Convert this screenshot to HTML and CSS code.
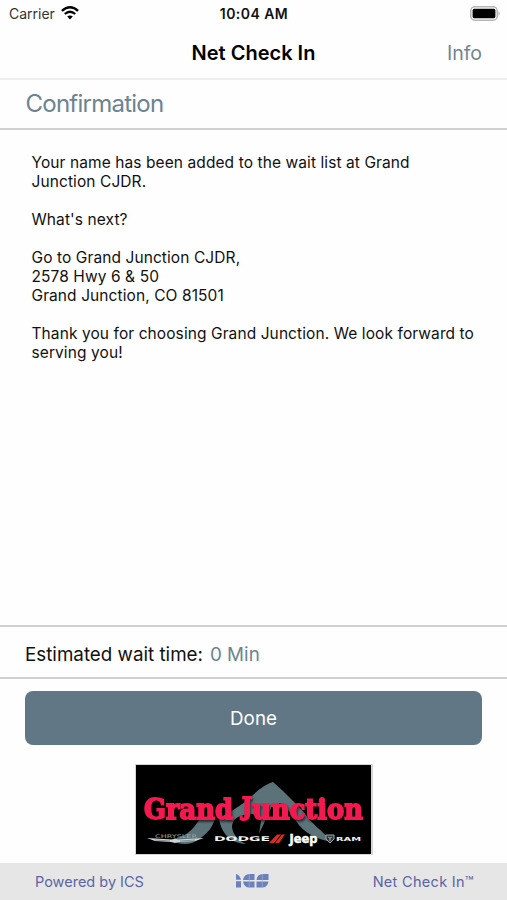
FILE: index.html
```html
<!DOCTYPE html>
<html lang="en">
<head>
<meta charset="utf-8">
<title>Net Check In</title>
<link rel="stylesheet" href="styles.css">
</head>
<body>
<div class="screen">
  <div class="status">
    <div class="carrier"><span class="carrier-name">Carrier</span>
      <svg class="wifi" width="18" height="14" viewBox="0 0 18 14" fill="none" stroke="#000" stroke-width="2.3"><path d="M.9 4.8Q9-2.4 17.1 4.8"/><path d="M3.8 8Q9 3.4 14.2 8"/><path d="M9 13.4 6.2 10.6Q9 8.3 11.8 10.6Z" fill="#000" stroke="none"/></svg>
    </div>
    <span class="time">10:04 AM</span>
    <svg class="battery" width="31" height="15" viewBox="0 0 31 15"><rect x=".8" y=".8" width="26.4" height="13.4" rx="4" fill="#fff" stroke="#b5b5b5" stroke-width="1.5"/><rect x="2.6" y="2.7" width="22.8" height="9.6" rx="1.8"/><path d="M28.5 5Q31 7.5 28.5 10Z" fill="#b0b0b0"/></svg>
  </div>
  <header class="nav"><span></span><h1 class="title">Net Check In</h1><a class="info">Info</a></header>
  <h2 class="heading">Confirmation</h2>
  <main class="message">
    <p>Your name has been added to the wait list at Grand<br>Junction CJDR.</p>
    <p>What's next?</p>
    <p>Go to Grand Junction CJDR,<br>2578 Hwy 6 &amp; 50<br>Grand Junction, CO 81501</p>
    <p>Thank you for choosing Grand Junction. We look forward to<br>serving you!</p>
  </main>
  <div class="wait"><span class="wait-label">Estimated wait time:</span><span class="wait-value">0 Min</span></div>
  <div class="actions"><button class="done">Done</button></div>
  <div class="brand">
    <svg width="238" height="91" viewBox="0 0 238 91">
      <rect width="238" height="91" fill="#d5d5d5"/><rect x="1" y="1" width="235" height="89" fill="#000"/>
      <path fill="#5a7278" d="M84 54Q98 47 114 35Q127 21 138 18L148 27L168 47C176 60 187 66 197 78C181 75 169 69 161 57L148 39L138 40L130 57L124 70L126 57L118 50C104 50 97 55 97 63C98 71 103 76 111 80C95 79 86 69 84 54Z"/>
      <path fill="#5a7278" d="M65 54H80C78 65 68 74 57 79Q46 82 35 76C50 73 59 66 65 54Z"/>
      <text class="dealer" x="9" y="55" textLength="219" lengthAdjust="spacingAndGlyphs">Grand <tspan class="initial" dy="-4.5">J</tspan><tspan dy="4.5">unction</tspan></text>
      <text class="make muted" x="20" y="73.500" font-size="5" textLength="42" lengthAdjust="spacingAndGlyphs">CHRYSLER</text>
      <path fill="#cdd2d4" d="M12 74 37 75.500 40 74.500 43 75.500 69 74 60 77 44 78 40 79 36 78 20 77Z"/><path d="M20 76 35 77M45 77 60 76" stroke="#566" stroke-width=".6"/>
      <text class="make" x="79" y="77" font-size="6.500" textLength="56" lengthAdjust="spacingAndGlyphs">DODGE</text>
      <path fill="#df2b25" d="M134 79 142 70.500H146L139 79ZM140 79 147 70.500H150L144 79Z"/>
      <text class="jeep" x="154.500" y="78.500" textLength="28" lengthAdjust="spacingAndGlyphs">Jeep</text>
      <path fill="#30383a" stroke="#a5abad" stroke-width="1" d="M191 71H199V75L195 79 191 75ZM193 73Q195 75 197 73M195 74V77"/>
      <text class="make" x="201" y="77" font-size="5.500" textLength="25" lengthAdjust="spacingAndGlyphs">RAM</text>
    </svg>
  </div>
  <footer class="footer">
    <span class="powered">Powered by ICS</span>
    <svg class="ics" width="34" height="14" viewBox="0 0 34 14" fill="#6b80bd"><path d="M1 0Q5 1 6 5.800H1ZM1 7.200H6V13.500H1ZM8 6Q9 0 14.500 0H19.500V6ZM8 7.500H19.500V13.500H14.500Q9 13.500 8 7.500ZM21.500 6Q22 0 28 0H33.500V6ZM21.500 7.500H33.500Q32.500 13.500 27 13.500H21.500Z"/><path d="M14.300 0V14M27.300 0V14" stroke="#a3b0d4" stroke-width=".7"/></svg>
    <span class="product">Net Check In™</span>
  </footer>
</div>
</body>
</html>
```
FILE: styles.css
```css
* { box-sizing: border-box; }
body { margin: 0; background: #fefefe; font-family: Inter, "Liberation Sans", sans-serif; color: #111; }
h1, h2, p { margin: 0; font-weight: 400; }
.screen { width: 507px; height: 900px; display: flex; flex-direction: column; overflow: hidden; }
.status { height: 27px; flex: none; display: grid; grid-template-columns: 1fr auto 1fr; align-items: center; padding: 0 6px 0 9px; }
.carrier { display: flex; align-items: center; gap: 6px; }
.carrier-name { font-size: 14px; line-height: 27px; color: #333; }
.wifi { margin-top: -1px; }
.time { font-size: 14px; font-weight: 600; letter-spacing: .45px; line-height: 27px; margin-right: 2px; }
.battery { justify-self: end; }
.nav { height: 53px; flex: none; display: grid; grid-template-columns: 1fr auto 1fr; align-items: center; padding: 0 25px; border-bottom: 2px solid #eee; }
.title { font-size: 20px; font-weight: 600; color: #000; }
.info { justify-self: end; font-size: 19.5px; color: #708592; }
.heading { height: 50px; flex: none; padding-left: 25.5px; border-bottom: 2px solid #cfcfcf; font-size: 24px; letter-spacing: -.75px; line-height: 48px; color: #6c8391; }
.message { flex: 1; padding: 23px 0 0 31.5px; font-size: 15.5px; letter-spacing: .09px; line-height: 19px; white-space: nowrap; }
.message p + p { margin-top: 19px; }
.wait { height: 54px; flex: none; display: flex; align-items: center; gap: 7px; padding: 5px 0 0 25px; border-top: 2px solid #d0d0d0; border-bottom: 2px solid #d0d0d0; font-size: 18.800px; }
.wait-value { color: #6c8391; }
.actions { flex: none; padding: 12px 25px 0; }
.done { display: block; width: 457px; height: 54px; border: 0; border-radius: 8px; background: #627786; color: #fff; font: 400 18.800px Inter, sans-serif; }
.brand { height: 118px; flex: none; padding: 19px 0 0 135px; }
.brand svg { display: block; }
.dealer { font: bold 28.5px "DejaVu Serif", serif; fill: #f4194f; stroke: #f4194f; stroke-width: 1.8; filter: drop-shadow(1px 2px 1px rgba(0, 0, 0, .6)); }
.initial { font-size: 23.5px; }
.make { font-family: "DejaVu Sans", sans-serif; font-weight: bold; fill: #f2f2f2; }
.muted { fill: #9ba5a8; font-weight: 400; }
.jeep { font: bold 13px "DejaVu Sans", sans-serif; fill: #fff; stroke: #fff; stroke-width: .5; }
.footer { height: 37px; flex: none; display: grid; grid-template-columns: 1fr auto 1fr; align-items: center; padding: 0 33px 0 35px; background: #e6e6e6; color: #5c64a6; font-size: 14.500px; }
.ics { margin: -1px 6px 0 0; }
.product { justify-self: end; letter-spacing: .3px; }
```
